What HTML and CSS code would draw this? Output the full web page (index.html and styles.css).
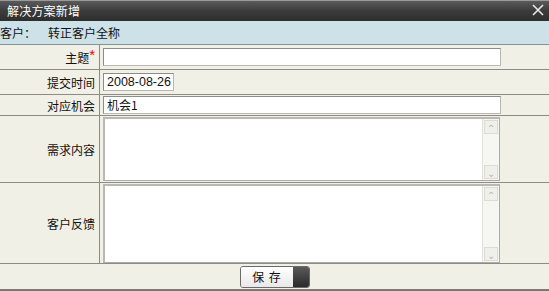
FILE: index.html
```html
<!DOCTYPE html>
<html>
<head>
<meta charset="utf-8">
<link rel="stylesheet" href="styles.css">
</head>
<body>
<div class="dialog">
  <div class="titlebar">
    <span class="title">解决方案新增</span>
    <svg class="close" width="14" height="14" viewBox="0 0 14 14"><path d="M2 2 L12 12 M12 2 L2 12" stroke="#e8e8e8" stroke-width="1.6" fill="none"/></svg>
  </div>
  <div class="custbar"><span class="cl">客户：</span><span class="cv">转正客户全称</span></div>
  <table class="form">
    <tr class="r1">
      <td class="lab">主题<span class="req">*</span></td>
      <td class="val"><div class="inp wide"></div></td>
    </tr>
    <tr class="r2">
      <td class="lab">提交时间</td>
      <td class="val"><div class="inp date">2008-08-26</div></td>
    </tr>
    <tr class="r3">
      <td class="lab">对应机会</td>
      <td class="val"><div class="inp wide opp">机会1</div></td>
    </tr>
    <tr class="r4">
      <td class="lab">需求内容</td>
      <td class="val"><div class="ta t1"><div class="sb"><span class="arr">&#8963;</span><span class="arr dn">&#8964;</span></div></div></td>
    </tr>
    <tr class="r5">
      <td class="lab">客户反馈</td>
      <td class="val"><div class="ta t2"><div class="sb"><span class="arr">&#8963;</span><span class="arr dn">&#8964;</span></div></div></td>
    </tr>
    <tr class="r6">
      <td colspan="2" class="btncell"><div class="btn"><span class="bt">保 存</span><span class="bdark"></span></div></td>
    </tr>
  </table>
</div>
</body>
</html>
```
FILE: styles.css
```css
html, body { margin: 0; padding: 0; background: #f1f0e6; }
body { font-family: "Noto Sans CJK SC", "Liberation Sans", sans-serif; font-size: 12px; color: #111; }
.dialog { width: 549px; height: 291px; overflow: hidden; }
.titlebar {
  height: 20px; border-top: 1px solid #9a9a9a;
  background: linear-gradient(#5a5a5a, #3b3b3b 50%, #2e2e2e);
  display: flex; align-items: center; justify-content: space-between;
  padding: 0 4px 0 7px; color: #fff;
}
.title { font-size: 12px; line-height: 20px; letter-spacing: 0.2px; }
.close { display: block; margin-top: -2px; }
.custbar {
  height: 23px; background: #cde1e8; border-bottom: 1px solid #8a9296;
  display: flex; align-items: center; line-height: 23px;
}
.cl { width: 48px; }
.form { border-collapse: collapse; width: 549px; }
.form td { border-bottom: 1px solid #8c8c84; padding: 0; }
.lab { width: 95px; text-align: right; padding-right: 4px !important; border-right: 1px solid #8c8c84; vertical-align: middle; white-space: nowrap; }
.val { padding-left: 3px !important; vertical-align: middle; }
.req { color: #e00; font-size: 15px; line-height: 10px; position: relative; top: -3px; font-family: "Liberation Sans", sans-serif; }
.r1 td { height: 24px; }
.r2 td { height: 24px; }
.r3 td { height: 20px; }
.r4 td { height: 66px; }
.r5 td { height: 80px; }
.r6 td { height: 25px; border-bottom: 2px solid #7a7a74; }
.inp {
  height: 16px; background: #fff; border: 1px solid #b8b8b0; border-top-color: #8c8c88; border-left-color: #8c8c88;
  font-family: "Liberation Sans", "Noto Sans CJK SC", sans-serif; font-size: 12.5px; line-height: 16px; padding-left: 3px;
  box-sizing: content-box; white-space: nowrap; overflow: hidden;
}
.wide { width: 393px; }
.date { width: 66px; }
.opp { font-family: "Noto Sans CJK SC", "Liberation Sans", sans-serif; font-size: 12px; }
.ta { width: 394px; background: #fff; border: 1px solid #aaa; border-top: 2px solid #b8b8b4; border-left: 2px solid #b8b8b4; position: relative; display: flex; justify-content: flex-end; }
.t1 { height: 61px; }
.t2 { height: 76px; }
.sb { width: 16px; background: #f6f6f2; border-left: 1px solid #e2e2da; display: flex; flex-direction: column; justify-content: space-between; }
.arr { height: 14px; width: 14px; margin: 1px; border: 1px solid #dcdcd6; background: #f0f0ea; color: #b8b8b0; font-size: 10px; line-height: 14px; text-align: center; display: block; box-sizing: border-box; }
.btncell { text-align: center; }
.btn { display: inline-flex; width: 68px; height: 20px; border: 1px solid #6a6a6a; border-radius: 3px; overflow: hidden; margin-left: 1px; vertical-align: middle; }
.bt { flex: 1; background: linear-gradient(#ffffff, #e8e8e8); line-height: 20px; text-align: center; letter-spacing: 1px; font-size: 12px; }
.bdark { width: 16px; background: linear-gradient(#5a5a5a, #2a2a2a); }
```
